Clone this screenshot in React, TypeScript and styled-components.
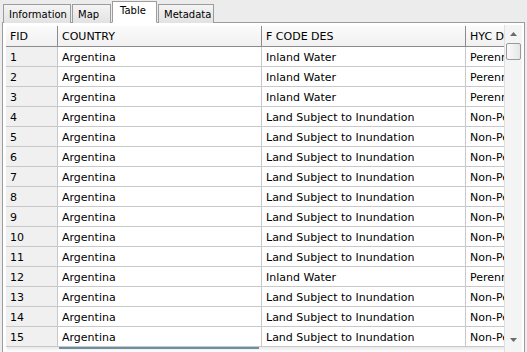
import styled, { createGlobalStyle } from 'styled-components';

const Global = createGlobalStyle`
  html, body {
    margin: 0;
    padding: 0;
    background: #ececec;
    overflow: hidden;
  }
  body {
    font-family: Tahoma, "DejaVu Sans", "Liberation Sans", sans-serif;
    font-size: 11px;
    color: #000;
  }
`;

const Frame = styled.div`
  width: 527px;
  height: 352px;
  padding: 1px 2px 0 2px;
  box-sizing: border-box;
  display: flex;
  flex-direction: column;
  background: #ececec;
`;

const TabBar = styled.div`
  display: flex;
  align-items: flex-end;
  height: 22px;
  padding-left: 1px;
  position: relative;
  z-index: 1;
  font-size: 10px;
`;

const Tab = styled.div<{ $active?: boolean; $w: number }>`
  width: ${({ $w }) => $w}px;
  height: ${({ $active }) => ($active ? '22px' : '19px')};
  padding: 0 0 0 ${({ $active }) => ($active ? '7px' : '5px')};
  margin-right: 1px;
  display: flex;
  align-items: center;
  box-sizing: border-box;
  border: 1px solid #9c9c9c;
  border-bottom: ${({ $active }) => ($active ? '1px solid #fff' : 'none')};
  background: ${({ $active }) =>
    $active ? '#fff' : 'linear-gradient(#f4f4f4, #e2e2e2)'};
  padding-bottom: ${({ $active }) => ($active ? '3px' : '0')};
`;

const Pane = styled.div`
  flex: 1;
  margin-top: -1px;
  border: 1px solid #9c9c9c;
  border-bottom: none;
  background: #fff;
  padding: 3px 2px 0 3px;
  display: flex;
  overflow: hidden;
`;

const Grid = styled.div`
  flex: 1;
  display: flex;
  flex-direction: column;
  overflow: hidden;
`;

const Row = styled.div`
  display: grid;
  grid-template-columns: 52px 204px 204px 40px;
  height: 20px;
  flex-shrink: 0;
  border-bottom: 1px solid #c8c8c8;
  box-sizing: border-box;
`;

const HeadRow = styled(Row)`
  height: 21px;
  border-bottom: 1px solid #8c8c8c;
  background: linear-gradient(#fbfbfb, #f1f1f1);
`;

const Cell = styled.div<{ $key?: boolean }>`
  padding-left: 4px;
  padding-top: 1px;
  display: flex;
  align-items: center;
  white-space: nowrap;
  overflow: hidden;
  border-right: 1px solid #c8c8c8;
  background: ${({ $key }) => ($key ? '#f0f0f0' : 'transparent')};
  &:last-child {
    border-right: none;
  }
`;

const HeadCell = styled(Cell)`
  border-right: 1px solid #8c8c8c;
  background: transparent;
`;

const BottomBar = styled.div`
  flex: 1;
  margin-left: 1px;
  background: linear-gradient(#e8e8e8, #fff);
  display: flex;
`;

const HThumb = styled.div`
  margin-left: 52px;
  width: 200px;
  border-top: 2px solid #6c8ea0;
`;

const VScroll = styled.div`
  width: 17px;
  margin-top: -1px;
  display: flex;
  flex-direction: column;
  background: #f4f4f4;
  border-left: 1px solid #e0e0e0;
`;

const Arrow = styled.div`
  height: 18px;
  display: flex;
  align-items: center;
  justify-content: center;
`;

const Thumb = styled.div`
  height: 15px;
  margin: 0 1px;
  border: 1px solid #9a9a9a;
  border-radius: 2px;
  background: linear-gradient(90deg, #fafafa, #e6e6e6);
`;

const Track = styled.div`
  flex: 1;
`;

const BottomArrow = styled(Arrow)`
  margin-bottom: 3px;
`;

const tabs = [
  { label: 'Information', w: 68 },
  { label: 'Map', w: 39 },
  { label: 'Table', w: 45, active: true },
  { label: 'Metadata', w: 56 },
];

const rows: [string, string, string][] = [
  ['1', 'Inland Water', 'Perennial'],
  ['2', 'Inland Water', 'Perennial'],
  ['3', 'Inland Water', 'Perennial'],
  ['4', 'Land Subject to Inundation', 'Non-Perennial'],
  ['5', 'Land Subject to Inundation', 'Non-Perennial'],
  ['6', 'Land Subject to Inundation', 'Non-Perennial'],
  ['7', 'Land Subject to Inundation', 'Non-Perennial'],
  ['8', 'Land Subject to Inundation', 'Non-Perennial'],
  ['9', 'Land Subject to Inundation', 'Non-Perennial'],
  ['10', 'Land Subject to Inundation', 'Non-Perennial'],
  ['11', 'Land Subject to Inundation', 'Non-Perennial'],
  ['12', 'Inland Water', 'Perennial'],
  ['13', 'Land Subject to Inundation', 'Non-Perennial'],
  ['14', 'Land Subject to Inundation', 'Non-Perennial'],
  ['15', 'Land Subject to Inundation', 'Non-Perennial'],
];

export default function App() {
  return (
    <Frame>
      <Global />
      <TabBar>
        {tabs.map((t) => (
          <Tab key={t.label} $w={t.w} $active={t.active}>
            {t.label}
          </Tab>
        ))}
      </TabBar>
      <Pane>
        <Grid>
          <HeadRow>
            <HeadCell>FID</HeadCell>
            <HeadCell>COUNTRY</HeadCell>
            <HeadCell>F CODE DES</HeadCell>
            <HeadCell>HYC DESC</HeadCell>
          </HeadRow>
          {rows.map(([fid, code, hyc]) => (
            <Row key={fid}>
              <Cell $key>{fid}</Cell>
              <Cell>Argentina</Cell>
              <Cell>{code}</Cell>
              <Cell>{hyc}</Cell>
            </Row>
          ))}
          <BottomBar>
            <HThumb />
          </BottomBar>
        </Grid>
        <VScroll>
          <Arrow>
            <svg width="7" height="4" viewBox="0 0 7 4">
              <path d="M0 4 L3.5 0 L7 4 Z" fill="#6a6a6a" />
            </svg>
          </Arrow>
          <Thumb />
          <Track />
          <BottomArrow>
            <svg width="7" height="4" viewBox="0 0 7 4">
              <path d="M0 0 L3.5 4 L7 0 Z" fill="#6a6a6a" />
            </svg>
          </BottomArrow>
        </VScroll>
      </Pane>
    </Frame>
  );
}
